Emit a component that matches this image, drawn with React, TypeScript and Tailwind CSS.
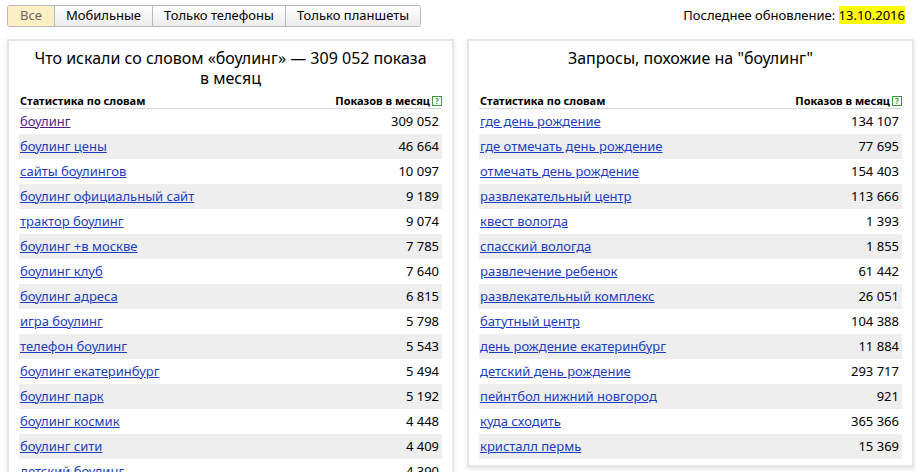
const left: [string, string][] = [
  ['боулинг', '309 052'], ['боулинг цены', '46 664'], ['сайты боулингов', '10 097'],
  ['боулинг официальный сайт', '9 189'], ['трактор боулинг', '9 074'], ['боулинг +в москве', '7 785'],
  ['боулинг клуб', '7 640'], ['боулинг адреса', '6 815'], ['игра боулинг', '5 798'],
  ['телефон боулинг', '5 543'], ['боулинг екатеринбург', '5 494'], ['боулинг парк', '5 192'],
  ['боулинг космик', '4 448'], ['боулинг сити', '4 409'], ['детский боулинг', '4 390'],
];
const right: [string, string][] = [
  ['где день рождение', '134 107'], ['где отмечать день рождение', '77 695'], ['отмечать день рождение', '154 403'],
  ['развлекательный центр', '113 666'], ['квест вологда', '1 393'], ['спасский вологда', '1 855'],
  ['развлечение ребенок', '61 442'], ['развлекательный комплекс', '26 051'], ['батутный центр', '104 388'],
  ['день рождение екатеринбург', '11 884'], ['детский день рождение', '293 717'], ['пейнтбол нижний новгород', '921'],
  ['куда сходить', '365 366'], ['кристалл пермь', '15 369'],
];

function Panel({ title, rows, first }: { title: string; rows: [string, string][]; first?: boolean }) {
  return (
    <div className="w-[447px] self-start border-2 border-[#e6e6e6] bg-white px-[10px] pb-[6px] shadow-[0_2px_4px_rgba(0,0,0,0.12)]">
      <div className="flex h-[54px] items-start justify-center px-3 pt-[7px] text-center text-[16px] leading-[20px] text-black">{title}</div>
      <div className="flex h-[14px] items-end justify-between border-b border-[#d6d6e0] pb-[1px] text-[11px] font-bold leading-[12px] text-black">
        <span className="pl-[1px]">Статистика по словам</span>
        <span className="flex items-center gap-[2px]">
          Показов в месяц
          <span className="flex h-[10px] w-[10px] items-center justify-center border border-[#3a9a3a] text-[8px] leading-none text-[#3a9a3a]">?</span>
        </span>
      </div>
      <div>
        {rows.map(([k, v], i) => (
          <div key={k} className={`flex h-[25px] items-center justify-between pl-[1px] pr-[2px] text-[13px] ${i % 2 ? 'bg-[#eeeeee]' : ''}`}>
            <a className={`underline ${first && i === 0 ? 'text-[#551a8b]' : 'text-[#1a3dc1]'}`}>{k}</a>
            <span className="pr-[1px] text-black">{v}</span>
          </div>
        ))}
      </div>
    </div>
  );
}

export default function App() {
  const tabs = ['Все', 'Мобильные', 'Только телефоны', 'Только планшеты'];
  return (
    <div className="h-[472px] w-[921px] overflow-hidden bg-white [font-family:'Liberation_Sans',Arial,sans-serif]">
      <div className="flex items-center justify-between px-[7px] pt-[5px]">
        <div className="flex h-[22px] overflow-hidden rounded-[3px] border border-[#b8b8b8] text-[13px]">
          {tabs.map((t, i) => (
            <div key={t} className={`flex items-center px-[11px] ${i ? 'border-l border-[#b8b8b8] bg-gradient-to-b from-white to-[#ececec] text-black' : 'bg-[#fcefc4] px-[12px] text-[#666]'}`}>{t}</div>
          ))}
        </div>
        <div className="pr-[9px] text-[13px] text-black">
          Последнее обновление: <span className="bg-[#ffff00]">13.10.2016</span>
        </div>
      </div>
      <div className="flex gap-[13px] px-[7px] pt-[12px]">
        <Panel title="Что искали со словом «боулинг» — 309 052 показа в месяц" rows={left} first />
        <Panel title={'Запросы, похожие на "боулинг"'} rows={right} />
      </div>
    </div>
  );
}
